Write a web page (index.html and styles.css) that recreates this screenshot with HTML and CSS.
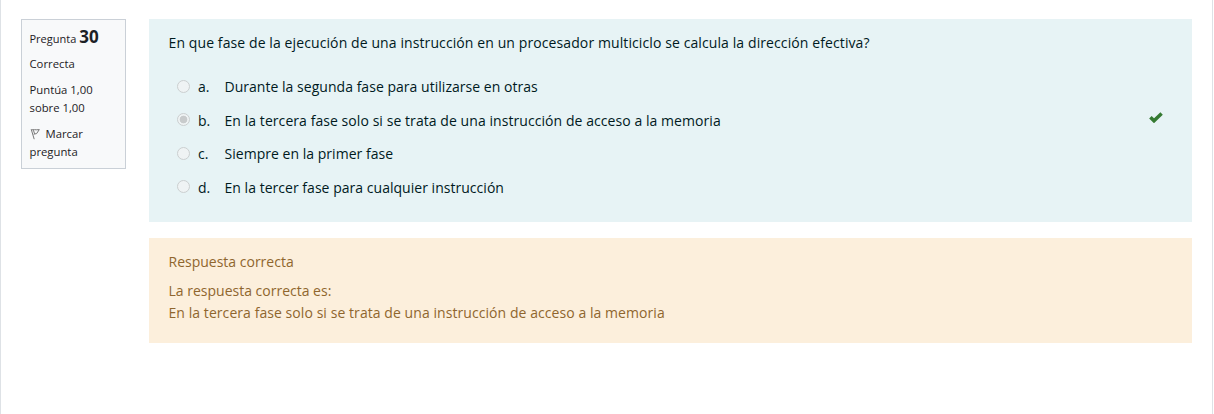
FILE: index.html
```html
<!DOCTYPE html>
<html lang="es">
<head>
<meta charset="utf-8">
<title>Pregunta 30</title>
<link rel="stylesheet" href="styles.css">
</head>
<body>
<main class="page">
  <aside class="info">
    <h3 class="number">Pregunta <span class="qno">30</span></h3>
    <div class="state">Correcta</div>
    <div class="grade">Puntúa 1,00<br>sobre 1,00</div>
    <div class="flag"><svg class="flag-icon" viewBox="0 0 10 12" width="10" height="12"><path d="M1.2 1.2 L4.2 11.2 M1.4 2 C3.5 1.2 5.5 2.2 9.3 1.6 L6.6 5.6 L3.6 6.2 M3.4 2.2 L4.6 5.8" fill="none" stroke="#777" stroke-width="1"/></svg>Marcar<br>pregunta</div>
  </aside>
  <div class="content">
    <section class="formulation">
      <p class="qtext">En que fase de la ejecución de una instrucción en un procesador multiciclo se calcula la dirección efectiva?</p>
      <div class="answers">
        <div class="answer"><span class="radio"></span><span class="letter">a.</span><span class="label">Durante la segunda fase para utilizarse en otras</span></div>
        <div class="answer"><span class="radio checked"></span><span class="letter">b.</span><span class="label wide">En la tercera fase solo si se trata de una instrucción de acceso a la memoria</span><svg class="check" viewBox="0 0 14 11" width="14" height="11"><path d="M1.4 5.2 L5 8.8 L12.6 1.5" fill="none" stroke="#357a32" stroke-width="3.5"/></svg></div>
        <div class="answer"><span class="radio"></span><span class="letter">c.</span><span class="label">Siempre en la primer fase</span></div>
        <div class="answer"><span class="radio"></span><span class="letter">d.</span><span class="label">En la tercer fase para cualquier instrucción</span></div>
      </div>
    </section>
    <section class="outcome">
      <p class="feedback">Respuesta correcta</p>
      <p class="right">La respuesta correcta es:<br><span class="wide">En la tercera fase solo si se trata de una instrucción de acceso a la memoria</span></p>
    </section>
  </div>
</main>
</body>
</html>
```
FILE: styles.css
```css
* { box-sizing: border-box; }
body {
  margin: 0;
  background: #fff;
  color: #1d2125;
  font: 14px/22px "Open Sans", "Noto Sans", sans-serif;
}
p, h3 { margin: 0; }
.page {
  display: flex;
  align-items: flex-start;
  gap: 23px;
  width: 1213px;
  height: 414px;
  padding: 19px 20px 0;
  border: solid #dee2e6;
  border-width: 0 1px;
}
.info {
  width: 105px;
  height: 150px;
  padding: 7px 7px 7px 7.5px;
  border: 1px solid #cad0d7;
  background: #f8f9fa;
  font-size: 11.3px;
  line-height: 18px;
  white-space: nowrap;
}
.number { font-size: 11px; font-weight: 400; line-height: 20px; }
.qno { font-size: 17px; font-weight: 700; }
.state { margin-top: 6px; }
.grade, .flag { margin-top: 8px; }
.flag-icon { margin-right: 6px; vertical-align: -2px; }
.content { flex: 1; }
.formulation {
  height: 203px;
  padding: 13px 19px 13px 19.5px;
  background: #e7f3f5;
  color: #001a1e;
}
.qtext { letter-spacing: 0.1px; }
.answers { margin-top: 16.5px; }
.answer {
  display: flex;
  align-items: center;
  height: 33.5px;
  padding-left: 8.5px;
}
.radio {
  width: 13px;
  height: 13px;
  margin: 0 8px 2.2px 0;
  border: 1px solid #cbcfd0;
  border-radius: 50%;
  background: #eff3f4;
}
.checked { background: radial-gradient(circle, #c8cbcc 0 3.5px, #eff3f4 4.2px); }
.letter { width: 26.5px; }
.label { letter-spacing: 0.03px; }
.wide { letter-spacing: 0.065px; }
.check { margin: 0 10px 7px auto; }
.outcome {
  height: 105px;
  margin-top: 16px;
  padding: 13px 19px 13px 19.5px;
  background: #fcefdc;
  color: #8f662e;
}
.right { margin-top: 7px; }
```
